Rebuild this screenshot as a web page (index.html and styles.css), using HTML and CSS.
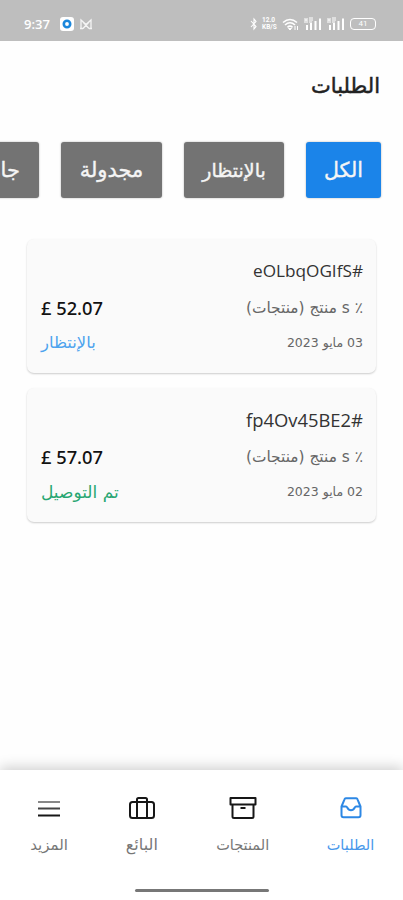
FILE: index.html
```html
<!DOCTYPE html>
<html lang="ar" dir="rtl">
<head>
<meta charset="utf-8">
<title>الطلبات</title>
<link rel="stylesheet" href="styles.css">
</head>
<body>
<div class="screen">
  <header class="status" dir="ltr">
    <span class="time">9:37</span>
    <svg class="app" width="14" height="14" viewBox="0 0 14 14"><rect width="14" height="14" rx="3" fill="#fff"/><circle cx="7" cy="7" r="3.2" fill="none" stroke="#1b87dc" stroke-width="2.6"/></svg>
    <svg class="mail" width="14" height="12" viewBox="0 0 14 12"><path d="M2 10.500V2L7 6.500 12 2v8.500M4 10.500 10 4M4 4l6 6.500M1 10.500h3M10 10.500h3" fill="none" stroke="#f5f5f5" stroke-width="1.300"/></svg>
    <span class="space"></span>
    <svg class="bt" width="8" height="14" viewBox="0 0 8 14"><path d="M1 4l5 5.500L4 12V2l2 2.500L1 10" fill="none" stroke="#fff" stroke-width="1.100"/></svg>
    <span class="speed"><b>12.0</b><b>KB/S</b></span>
    <svg class="wifi" width="17" height="14" viewBox="0 0 17 14"><path d="M1 5.500Q8 -.5 15 5.500M3 8q5-4.500 10 0M5.500 10.300q2.500-2.200 5 0" fill="none" stroke="#fff" stroke-width="1.600"/><path d="M6.500 11.500h3L8 13zM13 9v4M15.500 9v4" fill="#fff" stroke="#fff"/></svg>
    <svg class="sig" width="18" height="14" viewBox="0 0 18 14"><path d="M3 8v5M7 6v7M11.500 4v9M16 1.500v11.500" stroke="#fff" stroke-width="2"/><path d="M1 1v5M3 1v5M5 1h4M5 3h4M5 5h3M1 3h2" stroke="#fff"/></svg>
    <svg class="sig" width="18" height="14" viewBox="0 0 18 14"><path d="M3 8v5M7 6v7M11.500 4v9M16 1.500v11.500" stroke="#fff" stroke-width="2"/><path d="M1 1v5M3 1v5M5 1h4M5 3h4M5 5h3M1 3h2" stroke="#fff"/></svg>
    <span class="battery">41</span>
  </header>

  <h1>الطلبات</h1>

  <nav class="filters">
    <button class="chip all on"><span>الكل</span></button>
    <button class="chip wait"><span>بالإنتظار</span></button>
    <button class="chip sched"><span>مجدولة</span></button>
    <button class="chip run"><span>جارية</span></button>
  </nav>

  <main class="orders">
    <article class="card">
      <div class="id">#eOLbqOGIfS</div>
      <div class="row"><span class="items">٪ s منتج (منتجات)</span><span class="price" dir="ltr">£ 52.07</span></div>
      <div class="row"><span class="date">03 مايو 2023</span><span class="state pending">بالإنتظار</span></div>
    </article>
    <article class="card">
      <div class="id wide">#fp4Ov45BE2</div>
      <div class="row"><span class="items">٪ s منتج (منتجات)</span><span class="price" dir="ltr">£ 57.07</span></div>
      <div class="row"><span class="date">02 مايو 2023</span><span class="state done">تم التوصيل</span></div>
    </article>
  </main>

  <footer class="tabbar">
    <nav class="tabs">
      <a class="tab t1 on">
        <svg width="24" height="24" viewBox="0 0 24 24"><path d="M2.500 10.500 5.500 3.300q.3-1 1.300-1h10.400q1 0 1.300 1l3 7.200v8.700q0 2-2 2h-15q-2 0-2-2zM2.500 10.500H7q.8 0 1.200 1 1.500 2.800 3.800 2.800t3.800-2.800q.4-1 1.200-1h4.500"/></svg>
        <span>الطلبات</span>
      </a>
      <a class="tab t2">
        <svg width="28" height="24" viewBox="0 0 28 24"><path d="M1.500 2h25v6.500h-25zM3.500 8.500v12q0 1.500 1.500 1.500h18q1.500 0 1.500-1.500v-12M11.500 12h5"/></svg>
        <span>المنتجات</span>
      </a>
      <a class="tab t3">
        <svg width="28" height="24" viewBox="0 0 28 24"><rect x="2" y="6" width="24" height="16" rx="2.500"/><path d="M9 22V3.500Q9 2 10.500 2h7Q19 2 19 3.500V22"/></svg>
        <span>البائع</span>
      </a>
      <a class="tab t4">
        <svg width="24" height="24" viewBox="0 0 24 24"><path d="M1 6h22" stroke="#888"/><path d="M1 12.500h22" stroke="#444"/><path d="M1 19.500h22"/></svg>
        <span>المزيد</span>
      </a>
    </nav>
    <div class="home"></div>
  </footer>
</div>
</body>
</html>
```
FILE: styles.css
```css
* { box-sizing: border-box; }
body { margin: 0; background: #fff; font-family: "DejaVu Sans", sans-serif; color: #222; }
.screen { width: 403px; height: 900px; overflow: hidden; display: flex; flex-direction: column; background: #fefefe; }
.status { height: 41px; flex: none; background: #bebebe; color: #fff; display: flex; align-items: center; padding: 7px 27px 0 24px; }
.time { font: 600 13px/14px "Open Sans", sans-serif; width: 36px; }
.mail { margin-left: 5px; }
.space { flex: 1; }
.speed { width: 17px; margin: 0 3px 0 4px; font: 7px/8px Roboto, sans-serif; }
.speed b { display: block; height: 7px; line-height: 7px; font-size: 6.5px; }
.sig { margin-left: 5px; }
.battery { width: 26px; height: 12px; margin-left: 5px; border: 1px solid #fff; border-radius: 4px; font: 8px/10px Roboto, sans-serif; text-align: center; }
h1 { flex: none; margin: 0; padding: 29px 23px 0 0; height: 101px; font-size: 21px; line-height: 32px; font-weight: 500; white-space: nowrap; -webkit-text-stroke: .5px #222; }
.filters { flex: none; display: flex; gap: 22px; padding-right: 22px; height: 56px; }
.chip { flex: none; border: 0; padding: 0; height: 56px; border-radius: 3px; background: #737373; color: #f5f5f5; font: 19px/56px "DejaVu Sans", sans-serif; white-space: nowrap; box-shadow: 0 0 2px #aaa; -webkit-text-stroke: .4px #f5f5f5; }
.chip.on { background: #1b84e9; }
.all { width: 75px; font-size: 20.5px; }
.wait { width: 100px; }
.sched { width: 101px; font-size: 21px; }
.run { width: 100px; padding-right: 19px; text-align: right; font-size: 21px; }
.orders { flex: 1; padding: 41px 27px 0; display: flex; flex-direction: column; gap: 15px; }
.card { height: 134px; background: #fafafa; border-radius: 7px; padding: 16px 13px 0 14px; box-shadow: 0 1px 2px rgba(0,0,0,.2); }
.id { font: 17.2px/32px "Open Sans", sans-serif; height: 35px; color: #333; }
.id.wide { font-size: 18.4px; }
.row { display: flex; justify-content: space-between; height: 36px; line-height: 36px; white-space: nowrap; }
.row + .row { height: 34px; line-height: 34px; }
.items { font-size: 15.4px; color: #666; }
.price { font-family: "Noto Sans", sans-serif; font-size: 18.3px; font-weight: 500; color: #111; }
.date { font-size: 12.5px; color: #666; }
.state { font-size: 16.4px; }
.pending { color: #4da3ee; }
.done { color: #27a672; font-size: 17px; }
.tabbar { height: 130px; flex: none; background: #fff; box-shadow: 0 -3px 12px rgba(0,0,0,.18); display: flex; flex-direction: column; align-items: center; }
.tabs { height: 119px; width: 100%; display: flex; justify-content: space-between; padding: 26px 29px 0 30px; }
.tab { display: flex; flex-direction: column; align-items: center; color: #777; font-size: 14.5px; white-space: nowrap; }
.t1 { width: 47px; }
.t2 { width: 54px; }
.t3 { width: 33px; font-size: 16px; }
.t4 { width: 38px; font-size: 15px; }
.tab svg { flex: none; fill: none; stroke: #171717; stroke-width: 2; stroke-linejoin: round; }
.tab span { line-height: 20px; margin-top: 15px; }
.tab.on { color: #4898eb; }
.tab.on svg { stroke: #2d88e5; }
.home { width: 134px; height: 3px; border-radius: 2px; background: #777; }
```
